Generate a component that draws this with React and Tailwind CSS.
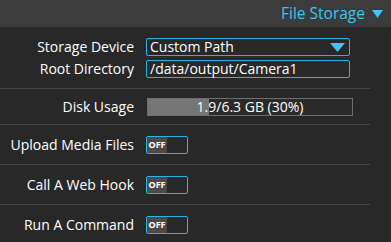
import React from "react";

const font = { fontFamily: '"Open Sans", "Noto Sans", sans-serif' };

function Toggle() {
  return (
    <div className="flex h-[18px] w-[42px] rounded-[2px] border border-[#2ab4e6] overflow-hidden">
      <div className="flex h-full w-[20px] items-center justify-center bg-[#4a4a4a] pb-[1px] text-[9px] font-bold leading-none text-white">
        OFF
      </div>
    </div>
  );
}

function Row({ label, children }) {
  return (
    <div className="flex h-[40px] items-center border-t border-[#474747]">
      <div className="w-[134px] text-right text-[14px] text-white">{label}</div>
      <div className="ml-[12px] flex items-center">{children}</div>
    </div>
  );
}

export default function App() {
  return (
    <div className="h-[242px] w-[391px] overflow-hidden bg-[#282828]" style={font}>
      <div className="flex h-[27px] items-center justify-end bg-[#3b3b3b] pr-[8px]">
        <span className="text-[15.5px] text-[#3ec5f3]">File Storage</span>
        <svg width="11" height="8" viewBox="0 0 11 8" className="ml-[7px] mt-[1px]">
          <polygon points="0,0 11,0 5.5,8" fill="#3ec5f3" />
        </svg>
      </div>
      <div className="w-[370px]">
        <div className="flex flex-col gap-[4px] pb-[10px] pt-[11px]">
          <div className="flex items-center">
            <div className="w-[134px] text-right text-[14px] leading-none text-white">Storage Device</div>
            <div className="ml-[12px] flex h-[18px] w-[204px] items-center justify-between rounded-[2px] border border-[#2ab4e6] pl-[3px] pr-[4px]">
              <span className="text-[14px] leading-none text-white">Custom Path</span>
              <svg width="15" height="9" viewBox="0 0 15 9">
                <polygon points="0,0 15,0 7.5,9" fill="#3ec5f3" />
              </svg>
            </div>
          </div>
          <div className="flex items-center">
            <div className="w-[134px] text-right text-[14px] leading-none text-white">Root Directory</div>
            <div className="ml-[12px] flex h-[18px] w-[204px] items-center rounded-[2px] border border-[#2ab4e6] pl-[3px]">
              <span className="text-[14px] leading-none text-white">/data/output/Camera1</span>
            </div>
          </div>
        </div>
        <div className="flex h-[36px] items-center border-t border-[#474747]">
          <div className="w-[134px] text-right text-[14px] text-white">Disk Usage</div>
          <div className="relative ml-[13px] h-[18px] w-[206px] border border-[#6e6e6e] bg-[#2a2a2a]">
            <div className="h-full w-[30%] bg-[#767676]" />
            <div className="absolute inset-0 flex items-center justify-center text-[14px] leading-none text-white">
              1.9/6.3 GB (30%)
            </div>
          </div>
        </div>
        <Row label="Upload Media Files"><Toggle /></Row>
        <Row label="Call A Web Hook"><Toggle /></Row>
        <Row label="Run A Command"><Toggle /></Row>
      </div>
    </div>
  );
}
